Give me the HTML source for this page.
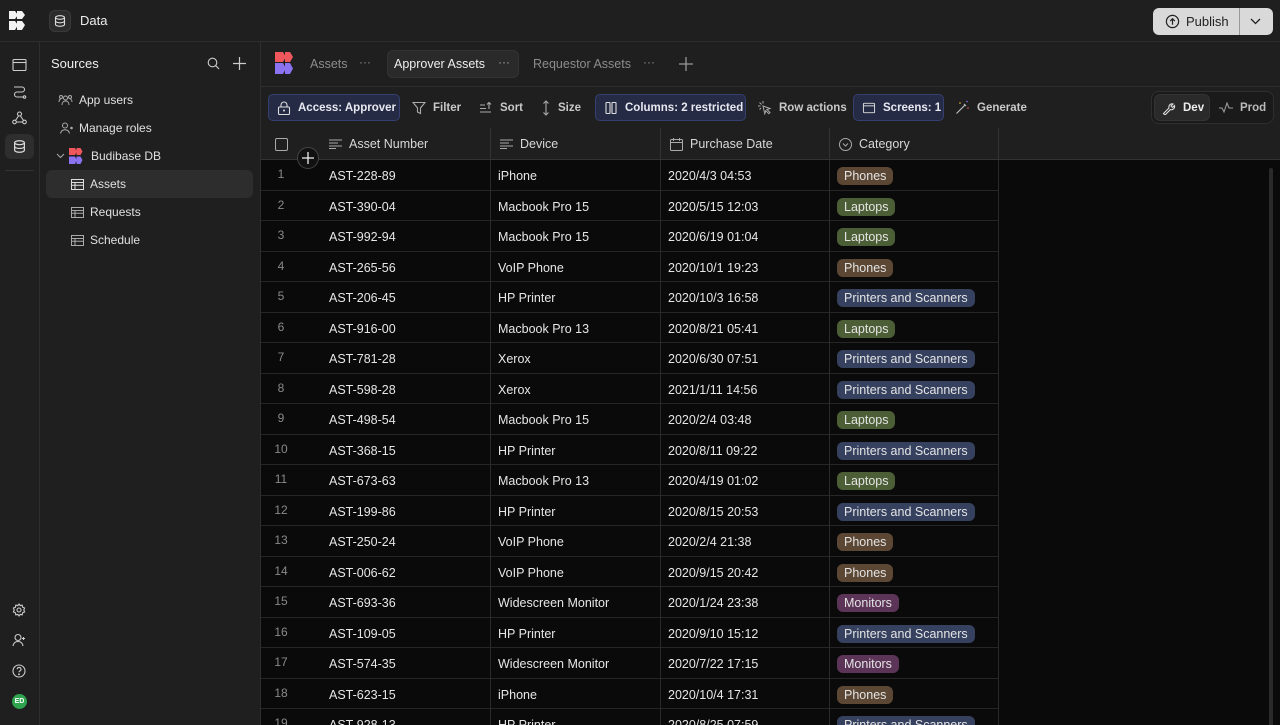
<!DOCTYPE html>
<html><head><meta charset="utf-8"><style>
*{box-sizing:border-box;margin:0;padding:0}
html,body{width:1280px;height:725px;overflow:hidden}
body{background:#1f1f1f;font-family:"Liberation Sans",sans-serif;color:#e6e6e6;font-size:13px;position:relative}
.abs{position:absolute}
svg{display:block;flex-shrink:0}
.top{left:0;top:0;width:1280px;height:42px;border-bottom:1px solid #2e2e2e;background:#1f1f1f}
.rail{left:0;top:42px;width:40px;height:683px;border-right:1px solid #2e2e2e;background:#1f1f1f}
.src{left:40px;top:42px;width:221px;height:683px;border-right:1px solid #2e2e2e;background:#1f1f1f}
.item{position:absolute;left:6px;width:207px;height:28px;display:flex;align-items:center;font-size:12px;color:#e0e0e0;border-radius:6px}
.tb{position:absolute;top:94px;height:27px;display:flex;align-items:center;gap:7px;font-size:11.5px;color:#c8c8c8;padding:0 8px;border-radius:5px;font-weight:bold;white-space:nowrap}
.tb.sel{background:#252b45;border:1px solid #344070;color:#e8e8f0}
.grid{left:261px;top:128px;width:1019px;height:597px;overflow:hidden}
.hdr{position:absolute;top:0;left:0;width:1019px;height:32px;background:#1f1f1f;border-bottom:1px solid #333}
.hc{position:absolute;top:0;height:32px;display:flex;align-items:center;gap:7px;font-size:12.5px;color:#d8d8d8;border-right:1px solid #333;padding-left:9px;white-space:nowrap}
.rows{position:absolute;top:32px;left:0;width:738px;background:#0a0a0a}
.r{position:relative;height:30.5px;border-bottom:1px solid #262626;font-size:12.5px;color:#e6e6e6;white-space:nowrap}
.r span{position:absolute;top:1px;line-height:30px}
.n{left:0;width:40px;text-align:center;color:#8a8a8a;font-size:12px;line-height:26px!important}
.c1{left:68px}.c2{left:237px}.c3{left:407px}
.c4{left:576px;top:7px!important;line-height:18px!important;padding:0 7px;border-radius:6px;color:#e4e4e4}
.vl{position:absolute;top:32px;width:1px;height:600px;background:#2a2a2a}
.P{background:#5b4734}.L{background:#4c5e35}.S{background:#35415f}.M{background:#5b3457}
</style></head><body>
<div class="abs top"></div>
<svg class="abs" style="left:9px;top:11px" width="19" height="19" viewBox="0 0 19 19"><path d="M0 0h6l3 4-3 4H0z M8 0h5l3 4-3 4H8z M0 10h6l3 4-3 5H0z M8 10h5l3 4-3 5H8z" fill="#f2f2f2"/></svg>
<div class="abs" style="left:49px;top:10px;width:22px;height:22px;border-radius:6px;background:#2c2c2c;border:1px solid #3a3a3a"></div>
<svg class="abs" style="left:54px;top:15px" width="12" height="12" viewBox="0 0 12 12" fill="none" stroke="#ddd" stroke-width="1.1"><ellipse cx="6" cy="2.5" rx="4.5" ry="1.8"/><path d="M1.5 2.5v7c0 1 2 1.8 4.5 1.8s4.5-.8 4.5-1.8v-7M1.5 6c0 1 2 1.8 4.5 1.8s4.5-.8 4.5-1.8"/></svg>
<div class="abs" style="left:80px;top:13px;font-size:13px;color:#eee">Data</div>
<div class="abs" style="left:1153px;top:8px;width:120px;height:27px;border-radius:6px;background:#d9d9d9"></div>
<div class="abs" style="left:1239px;top:8px;width:1px;height:27px;background:#999"></div>
<svg class="abs" style="left:1165px;top:14px" width="15" height="15" viewBox="0 0 16 16" fill="none" stroke="#222" stroke-width="1.3"><circle cx="8" cy="8" r="6.5"/><path d="M8 11.5V5M5.5 7.5 8 5l2.5 2.5"/></svg>
<div class="abs" style="left:1186px;top:14px;font-size:13px;color:#222">Publish</div>
<svg class="abs" style="left:1249px;top:16px" width="13" height="10" viewBox="0 0 13 10" fill="none" stroke="#222" stroke-width="1.3"><path d="M2 3l4.5 4.5L11 3"/></svg>

<div class="abs rail"></div>
<svg class="abs" style="left:12px;top:58px" width="15" height="14" viewBox="0 0 15 14" fill="none" stroke="#ccc" stroke-width="1.1"><rect x="1" y="1.5" width="13" height="11" rx="1"/><path d="M1 4.5h13"/></svg>
<svg class="abs" style="left:12px;top:85px" width="15" height="14" viewBox="0 0 15 14" fill="none" stroke="#ccc" stroke-width="1.1"><path d="M2 2h8a2.5 2.5 0 0 1 0 5H5a2.5 2.5 0 0 0 0 5h6"/><circle cx="12.5" cy="12" r="1.2"/></svg>
<svg class="abs" style="left:12px;top:111px" width="15" height="14" viewBox="0 0 15 14" fill="none" stroke="#ccc" stroke-width="1.1"><circle cx="7.5" cy="3" r="2"/><circle cx="2.5" cy="11" r="1.8"/><circle cx="12.5" cy="11" r="1.8"/><path d="M6.5 5 3.5 9.5M8.5 5l3 4.5M4.5 11h6"/></svg>
<div class="abs" style="left:5px;top:134px;width:29px;height:25px;border-radius:6px;background:#2e2e2e"></div>
<svg class="abs" style="left:13px;top:140px" width="13" height="13" viewBox="0 0 12 12" fill="none" stroke="#ddd" stroke-width="1.1"><ellipse cx="6" cy="2.5" rx="4.5" ry="1.8"/><path d="M1.5 2.5v7c0 1 2 1.8 4.5 1.8s4.5-.8 4.5-1.8v-7M1.5 6c0 1 2 1.8 4.5 1.8s4.5-.8 4.5-1.8"/></svg>
<div class="abs" style="left:5px;top:170px;width:29px;height:1px;background:#333"></div>
<svg class="abs" style="left:12px;top:603px" width="14" height="14" viewBox="0 0 14 14" fill="none" stroke="#ccc" stroke-width="1.1"><circle cx="7" cy="7" r="2"/><path d="M7 1l1.2 1.6 2-.4.4 2L12.6 5l-.8 2 .8 2-2 .8-.4 2-2-.4L7 13l-1.2-1.6-2 .4-.4-2L1.4 9l.8-2-.8-2 2-.8.4-2 2 .4z"/></svg>
<svg class="abs" style="left:12px;top:633px" width="15" height="14" viewBox="0 0 15 14" fill="none" stroke="#ccc" stroke-width="1.1"><circle cx="6" cy="4.5" r="3"/><path d="M1 13c.5-3 2.5-4.5 5-4.5s4.5 1.5 5 4.5M11.5 4v3M10 5.5h3"/></svg>
<svg class="abs" style="left:12px;top:664px" width="14" height="14" viewBox="0 0 14 14" fill="none" stroke="#ccc" stroke-width="1.1"><circle cx="7" cy="7" r="6"/><path d="M5.2 5.3a1.9 1.9 0 1 1 2.5 1.8c-.5.2-.7.6-.7 1.2"/><circle cx="7" cy="10.3" r=".4" fill="#ccc"/></svg>
<div class="abs" style="left:12px;top:694px;width:15px;height:15px;border-radius:50%;background:#2ea44f;font-size:7px;font-weight:bold;color:#fff;text-align:center;line-height:15px">ED</div>

<div class="abs src">
 <div class="abs" style="left:11px;top:14px;font-size:13px;color:#eee">Sources</div>
 <svg class="abs" style="left:167px;top:15px" width="13" height="13" viewBox="0 0 13 13" fill="none" stroke="#ccc" stroke-width="1.1"><circle cx="5.5" cy="5.5" r="4.3"/><path d="M8.7 8.7 12 12"/></svg>
 <svg class="abs" style="left:193px;top:15px" width="13" height="13" viewBox="0 0 13 13" stroke="#ccc" stroke-width="1.2"><path d="M6.5 0v13M0 6.5h13"/></svg>
 <div class="item" style="top:44px"><svg style="margin:0 6px 0 12px" width="15" height="12" viewBox="0 0 15 12" fill="none" stroke="#aaa" stroke-width="1"><circle cx="7.5" cy="4" r="2"/><circle cx="3" cy="3" r="1.5"/><circle cx="12" cy="3" r="1.5"/><path d="M4 11c0-2.5 1.5-4 3.5-4s3.5 1.5 3.5 4M1 8c0-2 1-3 2-3M14 8c0-2-1-3-2-3"/></svg>App users</div>
 <div class="item" style="top:72px"><svg style="margin:0 5px 0 13px" width="15" height="12" viewBox="0 0 15 12" fill="none" stroke="#aaa" stroke-width="1"><circle cx="6" cy="3.5" r="2.5"/><path d="M1.5 11.5c.5-2.5 2-3.7 4.5-3.7s4 1.2 4.5 3.7"/><circle cx="12.5" cy="6" r=".8" fill="#aaa"/></svg>Manage roles</div>
 <div class="item" style="top:100px"><svg style="margin:0 4px 0 10px" width="9" height="6" viewBox="0 0 9 6" fill="none" stroke="#aaa" stroke-width="1"><path d="M1 1l3.5 3.5L8 1"/></svg><svg style="margin-right:5px" width="17" height="16" viewBox="0 0 17 16"><path d="M0 0h6l2 3.5-2 3.5H0z M7.5 0h4l2 3.5-2 3.5h-4z" fill="#f0575d"/><path d="M0 8.5h6l2 3.5-2 4H0z M7.5 8.5h4l2 3.5-2 4h-4z" fill="#8a72f0"/></svg>Budibase DB</div>
 <div class="item" style="top:128px;background:#2d2d2d"><svg style="margin:0 6px 0 25px" width="13" height="11" viewBox="0 0 13 11" fill="none" stroke="#ddd" stroke-width="1"><rect x=".5" y=".5" width="12" height="10"/><path d="M.5 3.5h12M.5 6.3h12M4 3.5v7"/></svg>Assets</div>
 <div class="item" style="top:156px"><svg style="margin:0 6px 0 25px" width="13" height="11" viewBox="0 0 13 11" fill="none" stroke="#aaa" stroke-width="1"><rect x=".5" y=".5" width="12" height="10"/><path d="M.5 3.5h12M.5 6.3h12M4 3.5v7"/></svg>Requests</div>
 <div class="item" style="top:184px"><svg style="margin:0 6px 0 25px" width="13" height="11" viewBox="0 0 13 11" fill="none" stroke="#aaa" stroke-width="1"><rect x=".5" y=".5" width="12" height="10"/><path d="M.5 3.5h12M.5 6.3h12M4 3.5v7"/></svg>Schedule</div>
</div>

<svg class="abs" style="left:275px;top:52px" width="22" height="22" viewBox="0 0 22 22"><path d="M0 0h8l3 5-3 5H0z M10 0h5l3 5-3 5h-5z" fill="#f0575d"/><path d="M0 11h8l3 5.5-3 5.5H0z M10 11h5l3 5.5-3 5.5h-5z" fill="#8a72f0"/></svg>
<div class="abs" style="left:310px;top:57px;font-size:12.5px;color:#8c8c8c">Assets</div>
<div class="abs" style="left:359px;top:55px;font-size:12px;color:#8c8c8c">···</div>
<div class="abs" style="left:387px;top:50px;width:132px;height:28px;border-radius:6px;background:#2a2a2a;border:1px solid #333"></div>
<div class="abs" style="left:394px;top:57px;font-size:12.5px;color:#eee">Approver Assets</div>
<div class="abs" style="left:498px;top:55px;font-size:12px;color:#aaa">···</div>
<div class="abs" style="left:533px;top:57px;font-size:12.5px;color:#8c8c8c">Requestor Assets</div>
<div class="abs" style="left:643px;top:55px;font-size:12px;color:#8c8c8c">···</div>
<svg class="abs" style="left:679px;top:57px" width="14" height="14" stroke="#999" stroke-width="1.3"><path d="M7 0v14M0 7h14"/></svg>
<div class="abs" style="left:261px;top:86px;width:1019px;height:1px;background:#2e2e2e"></div>

<div class="tb sel" style="left:268px;width:132px"><svg width="14" height="14" viewBox="0 0 14 14" fill="none" stroke="#ddd" stroke-width="1.1"><rect x="1.5" y="6" width="11" height="7.5" rx="1"/><path d="M4 6V4a3 3 0 0 1 6 0v2"/><circle cx="7" cy="9.5" r=".5"/></svg>Access: Approver</div>
<div class="tb" style="left:404px"><svg width="14" height="14" viewBox="0 0 14 14" fill="none" stroke="#aaa" stroke-width="1.1"><path d="M1 1.5h12L8.5 7v5.5l-3-1.5V7z"/></svg>Filter</div>
<div class="tb" style="left:471px"><svg width="14" height="14" viewBox="0 0 14 14" fill="none" stroke="#aaa" stroke-width="1.1"><path d="M1 4h5M1 7.5h6M1 11h11M10 8V1.5M8 3.5l2-2 2 2"/></svg>Sort</div>
<div class="tb" style="left:533px"><svg width="10" height="16" viewBox="0 0 10 16" fill="none" stroke="#aaa" stroke-width="1.1"><path d="M5 1v14M2.5 3.5 5 1l2.5 2.5M2.5 12.5 5 15l2.5-2.5"/></svg>Size</div>
<div class="tb sel" style="left:595px;width:151px"><svg width="14" height="14" viewBox="0 0 14 14" fill="none" stroke="#ddd" stroke-width="1.1"><rect x="2" y="1.5" width="4" height="11" rx=".5"/><rect x="8" y="1.5" width="4" height="11" rx=".5"/></svg>Columns: 2 restricted</div>
<div class="tb" style="left:749px"><svg width="15" height="15" viewBox="0 0 15 15" fill="none" stroke="#aaa" stroke-width="1"><path d="M6 6l7 2.5-3 1 3 3-1.2 1.2-3-3-1 3z M1 6h2.5M6 1v2.5M2.5 2.5l2 2M2.5 9.5l1.5-1.5"/></svg>Row actions</div>
<div class="tb sel" style="left:853px;width:91px"><svg width="14" height="12" viewBox="0 0 15 14" fill="none" stroke="#ddd" stroke-width="1.1"><rect x="1" y="1.5" width="13" height="11" rx="1"/><path d="M1 4.5h13"/></svg>Screens: 1</div>
<div class="tb" style="left:947px"><svg width="15" height="15" viewBox="0 0 15 15" fill="none" stroke="#bbb" stroke-width="1.2"><path d="M1.5 13.5 10 5M9 4l2 2"/><circle cx="5" cy="3" r=".8" fill="#e8c542" stroke="none"/><circle cx="12" cy="1.5" r=".8" fill="#8a72f0" stroke="none"/><circle cx="13" cy="8" r=".8" fill="#f0575d" stroke="none"/></svg>Generate</div>
<div class="abs" style="left:1151px;top:91px;width:123px;height:33px;border-radius:8px;border:1px solid #2f2f2f;background:#1a1a1a"></div>
<div class="abs" style="left:1154px;top:94px;width:56px;height:27px;border-radius:6px;background:#2a2a2a;border:1px solid #333"></div>
<div class="tb" style="left:1154px;color:#eee"><svg width="14" height="14" viewBox="0 0 14 14" fill="none" stroke="#ddd" stroke-width="1.1"><path d="M1.5 12.5 7 7a3.2 3.2 0 0 1 4-4l-2 2 1.5 1.5 2-2a3.2 3.2 0 0 1-4 4l-5.5 5.5z"/></svg>Dev</div>
<div class="tb" style="left:1211px;color:#bbb"><svg width="14" height="12" viewBox="0 0 14 12" fill="none" stroke="#999" stroke-width="1.1"><path d="M0 6h3l2 4 3-9 2 5h4"/></svg>Prod</div>
<div class="abs" style="left:261px;top:128px;width:1019px;height:1px;background:#2e2e2e"></div>

<div class="abs grid">
 <div class="hdr"></div>
 <div class="abs" style="left:14px;top:10px;width:13px;height:13px;border:1.5px solid #aaa;border-radius:2px"></div>
 <div class="hc" style="left:59px;width:171px"><svg width="13" height="10" viewBox="0 0 13 10" stroke="#aaa" stroke-width="1.1"><path d="M0 1h13M0 4h9M0 7h13M0 9.5h7"/></svg>Asset Number</div>
 <div class="hc" style="left:230px;width:170px"><svg width="13" height="10" viewBox="0 0 13 10" stroke="#aaa" stroke-width="1.1"><path d="M0 1h13M0 4h9M0 7h13M0 9.5h7"/></svg>Device</div>
 <div class="hc" style="left:400px;width:169px"><svg width="13" height="13" viewBox="0 0 13 13" fill="none" stroke="#aaa" stroke-width="1"><rect x=".5" y="1.5" width="12" height="11" rx="1"/><path d="M.5 4.5h12M3.5 0v3M9.5 0v3"/></svg>Purchase Date</div>
 <div class="hc" style="left:569px;width:169px"><svg width="13" height="13" viewBox="0 0 13 13" fill="none" stroke="#aaa" stroke-width="1"><circle cx="6.5" cy="6.5" r="6"/><path d="M4 5.5l2.5 2.5L9 5.5"/></svg>Category</div>
 <div class="rows">
  <div class="r"><span class="n">1</span><span class="c1">AST-228-89</span><span class="c2">iPhone</span><span class="c3">2020/4/3 04:53</span><span class="c4 P">Phones</span></div>
  <div class="r"><span class="n">2</span><span class="c1">AST-390-04</span><span class="c2">Macbook Pro 15</span><span class="c3">2020/5/15 12:03</span><span class="c4 L">Laptops</span></div>
  <div class="r"><span class="n">3</span><span class="c1">AST-992-94</span><span class="c2">Macbook Pro 15</span><span class="c3">2020/6/19 01:04</span><span class="c4 L">Laptops</span></div>
  <div class="r"><span class="n">4</span><span class="c1">AST-265-56</span><span class="c2">VoIP Phone</span><span class="c3">2020/10/1 19:23</span><span class="c4 P">Phones</span></div>
  <div class="r"><span class="n">5</span><span class="c1">AST-206-45</span><span class="c2">HP Printer</span><span class="c3">2020/10/3 16:58</span><span class="c4 S">Printers and Scanners</span></div>
  <div class="r"><span class="n">6</span><span class="c1">AST-916-00</span><span class="c2">Macbook Pro 13</span><span class="c3">2020/8/21 05:41</span><span class="c4 L">Laptops</span></div>
  <div class="r"><span class="n">7</span><span class="c1">AST-781-28</span><span class="c2">Xerox</span><span class="c3">2020/6/30 07:51</span><span class="c4 S">Printers and Scanners</span></div>
  <div class="r"><span class="n">8</span><span class="c1">AST-598-28</span><span class="c2">Xerox</span><span class="c3">2021/1/11 14:56</span><span class="c4 S">Printers and Scanners</span></div>
  <div class="r"><span class="n">9</span><span class="c1">AST-498-54</span><span class="c2">Macbook Pro 15</span><span class="c3">2020/2/4 03:48</span><span class="c4 L">Laptops</span></div>
  <div class="r"><span class="n">10</span><span class="c1">AST-368-15</span><span class="c2">HP Printer</span><span class="c3">2020/8/11 09:22</span><span class="c4 S">Printers and Scanners</span></div>
  <div class="r"><span class="n">11</span><span class="c1">AST-673-63</span><span class="c2">Macbook Pro 13</span><span class="c3">2020/4/19 01:02</span><span class="c4 L">Laptops</span></div>
  <div class="r"><span class="n">12</span><span class="c1">AST-199-86</span><span class="c2">HP Printer</span><span class="c3">2020/8/15 20:53</span><span class="c4 S">Printers and Scanners</span></div>
  <div class="r"><span class="n">13</span><span class="c1">AST-250-24</span><span class="c2">VoIP Phone</span><span class="c3">2020/2/4 21:38</span><span class="c4 P">Phones</span></div>
  <div class="r"><span class="n">14</span><span class="c1">AST-006-62</span><span class="c2">VoIP Phone</span><span class="c3">2020/9/15 20:42</span><span class="c4 P">Phones</span></div>
  <div class="r"><span class="n">15</span><span class="c1">AST-693-36</span><span class="c2">Widescreen Monitor</span><span class="c3">2020/1/24 23:38</span><span class="c4 M">Monitors</span></div>
  <div class="r"><span class="n">16</span><span class="c1">AST-109-05</span><span class="c2">HP Printer</span><span class="c3">2020/9/10 15:12</span><span class="c4 S">Printers and Scanners</span></div>
  <div class="r"><span class="n">17</span><span class="c1">AST-574-35</span><span class="c2">Widescreen Monitor</span><span class="c3">2020/7/22 17:15</span><span class="c4 M">Monitors</span></div>
  <div class="r"><span class="n">18</span><span class="c1">AST-623-15</span><span class="c2">iPhone</span><span class="c3">2020/10/4 17:31</span><span class="c4 P">Phones</span></div>
  <div class="r"><span class="n">19</span><span class="c1">AST-928-13</span><span class="c2">HP Printer</span><span class="c3">2020/8/25 07:59</span><span class="c4 S">Printers and Scanners</span></div>
 </div>
 <div class="vl" style="left:229px"></div><div class="vl" style="left:399px"></div><div class="vl" style="left:568px"></div><div class="vl" style="left:737px"></div>
 <div class="abs" style="left:738px;top:32px;width:281px;height:600px;background:#0a0a0a"></div>
 <div class="abs" style="left:1008px;top:40px;width:4px;height:560px;border-radius:2px;background:#2a2a2a"></div>
 <div class="abs" style="left:36px;top:19px;width:22px;height:22px;border-radius:50%;background:#111;border:1px solid #444"></div>
 <svg class="abs" style="left:41px;top:24px" width="12" height="12" stroke="#eee" stroke-width="1.3"><path d="M6 0v12M0 6h12"/></svg>
</div>
</body></html>
